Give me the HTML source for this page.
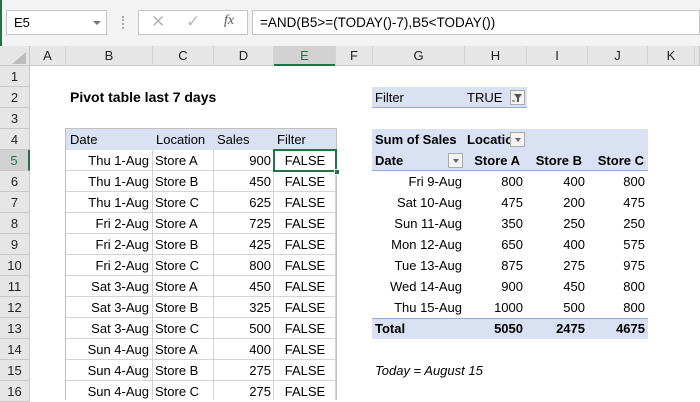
<!DOCTYPE html>
<html><head><style>
*{box-sizing:border-box;margin:0;padding:0}
body{width:700px;height:400px;overflow:hidden;background:#fff;font-family:"Liberation Sans",sans-serif;font-size:13px;color:#000;position:relative}
.a{position:absolute;white-space:nowrap;line-height:21px;height:21px}
.r{text-align:right}
.c{text-align:center}
.b{font-weight:bold}
.vl{position:absolute;top:46px;width:1px;height:354px;background:#d4d4d4}
.hl{position:absolute;left:30px;width:670px;height:1px;background:#d4d4d4}
.rh{position:absolute;left:0;width:30px;height:21px;line-height:21px;text-align:center;background:#e6e6e6;border-bottom:1px solid #c8c8c8;border-right:1px solid #c8c8c8;font-size:13px;color:#222}
.ch{position:absolute;top:46px;height:20px;line-height:20px;text-align:center;background:#e6e6e6;border-right:1px solid #c8c8c8;border-bottom:1px solid #c8c8c8;font-size:13px;color:#222}
.dd{position:absolute;width:15px;height:15px;border:1px solid #aaa;background:#f4f4f4}
.dd:after{content:"";position:absolute;left:4px;top:5px;border-left:3px solid transparent;border-right:3px solid transparent;border-top:4px solid #666}
</style></head><body>
<div style="position:absolute;left:0;top:0;width:700px;height:46px;background:#f3f3f3"></div>
<div style="position:absolute;left:6px;top:10px;width:101px;height:25px;background:#fff;border:1px solid #c6c6c6;line-height:23px;padding-left:7px;font-size:13px">E5</div>
<div style="position:absolute;left:93px;top:21px;border-left:4px solid transparent;border-right:4px solid transparent;border-top:4px solid #777"></div>
<div style="position:absolute;left:122px;top:16px;width:2px;height:13px;border-left:2px dotted #aaa"></div>
<div style="position:absolute;left:138px;top:10px;width:110px;height:25px;background:#fff;border:1px solid #c6c6c6"></div>
<div style="position:absolute;left:151px;top:12px;font-size:17px;color:#b8b8b8">✕</div>
<div style="position:absolute;left:186px;top:12px;font-size:17px;color:#b8b8b8">✓</div>
<div style="position:absolute;left:224px;top:13px;font-size:14px;font-style:italic;font-family:'Liberation Serif',serif;color:#555">fx</div>
<div style="position:absolute;left:252px;top:10px;width:448px;height:25px;background:#fff;border:1px solid #c6c6c6;line-height:23px;padding-left:7px;font-size:13.5px">=AND(B5&gt;=(TODAY()-7),B5&lt;TODAY())</div>
<div style="position:absolute;left:0;top:0;width:2px;height:400px;background:#217346"></div>
<div class="ch" style="left:0;width:30px"></div>
<div style="position:absolute;left:12px;top:52px;border-left:14px solid transparent;border-bottom:12px solid #bdbdbd"></div>
<div class="ch" style="left:30px;width:36px">A</div>
<div class="ch" style="left:66px;width:87px">B</div>
<div class="ch" style="left:153px;width:61px">C</div>
<div class="ch" style="left:214px;width:60px">D</div>
<div class="ch" style="left:274px;width:62px;background:#d2d2d2;border-bottom:2px solid #217346;color:#217346">E</div>
<div class="ch" style="left:336px;width:37px">F</div>
<div class="ch" style="left:373px;width:92px">G</div>
<div class="ch" style="left:465px;width:62px">H</div>
<div class="ch" style="left:527px;width:61px">I</div>
<div class="ch" style="left:588px;width:60px">J</div>
<div class="ch" style="left:648px;width:47px">K</div>
<div class="ch" style="left:695px;width:5px"></div>
<div class="vl" style="left:65px"></div><div class="vl" style="left:152px"></div><div class="vl" style="left:213px"></div><div class="vl" style="left:273px"></div><div class="vl" style="left:335px"></div><div class="vl" style="left:372px"></div><div class="vl" style="left:464px"></div><div class="vl" style="left:526px"></div><div class="vl" style="left:587px"></div><div class="vl" style="left:647px"></div><div class="vl" style="left:694px"></div>
<div class="hl" style="top:86px"></div><div class="hl" style="top:107px"></div><div class="hl" style="top:128px"></div><div class="hl" style="top:149px"></div><div class="hl" style="top:170px"></div><div class="hl" style="top:191px"></div><div class="hl" style="top:212px"></div><div class="hl" style="top:233px"></div><div class="hl" style="top:254px"></div><div class="hl" style="top:275px"></div><div class="hl" style="top:296px"></div><div class="hl" style="top:317px"></div><div class="hl" style="top:338px"></div><div class="hl" style="top:359px"></div><div class="hl" style="top:380px"></div>
<div style="position:absolute;left:30px;top:66px;width:670px;height:63px;background:#fff"></div>
<div style="position:absolute;left:30px;top:129px;width:36px;height:271px;background:#fff"></div>
<div style="position:absolute;left:336px;top:129px;width:364px;height:271px;background:#fff"></div>
<div style="position:absolute;left:648px;top:66px;width:52px;height:334px;background:#fff"></div>
<div class="rh" style="top:66px">1</div><div class="rh" style="top:87px">2</div><div class="rh" style="top:108px">3</div><div class="rh" style="top:129px">4</div>
<div class="rh" style="top:150px;background:#d2d2d2;border-right:2px solid #217346;color:#217346">5</div>
<div class="rh" style="top:171px">6</div><div class="rh" style="top:192px">7</div><div class="rh" style="top:213px">8</div><div class="rh" style="top:234px">9</div><div class="rh" style="top:255px">10</div><div class="rh" style="top:276px">11</div><div class="rh" style="top:297px">12</div><div class="rh" style="top:318px">13</div><div class="rh" style="top:339px">14</div><div class="rh" style="top:360px">15</div><div class="rh" style="top:381px">16</div>
<div class="a b" style="left:70px;top:87px;font-size:14px">Pivot table last 7 days</div>
<div style="position:absolute;left:66px;top:129px;width:270px;height:21px;background:#d9e1f2"></div>
<div style="position:absolute;left:65px;top:128px;width:272px;height:272px;border:1px solid #c0c0c0;border-bottom:none"></div>
<div class="a" style="left:70px;top:129px">Date</div><div class="a" style="left:156px;top:129px">Location</div><div class="a" style="left:217px;top:129px">Sales</div><div class="a" style="left:277px;top:129px">Filter</div>
<div class="a r" style="left:66px;width:83px;top:150px">Thu 1-Aug</div><div class="a" style="left:155px;top:150px">Store A</div><div class="a r" style="left:214px;width:57px;top:150px">900</div><div class="a c" style="left:274px;width:62px;top:150px">FALSE</div>
<div class="a r" style="left:66px;width:83px;top:171px">Thu 1-Aug</div><div class="a" style="left:155px;top:171px">Store B</div><div class="a r" style="left:214px;width:57px;top:171px">450</div><div class="a c" style="left:274px;width:62px;top:171px">FALSE</div>
<div class="a r" style="left:66px;width:83px;top:192px">Thu 1-Aug</div><div class="a" style="left:155px;top:192px">Store C</div><div class="a r" style="left:214px;width:57px;top:192px">625</div><div class="a c" style="left:274px;width:62px;top:192px">FALSE</div>
<div class="a r" style="left:66px;width:83px;top:213px">Fri 2-Aug</div><div class="a" style="left:155px;top:213px">Store A</div><div class="a r" style="left:214px;width:57px;top:213px">725</div><div class="a c" style="left:274px;width:62px;top:213px">FALSE</div>
<div class="a r" style="left:66px;width:83px;top:234px">Fri 2-Aug</div><div class="a" style="left:155px;top:234px">Store B</div><div class="a r" style="left:214px;width:57px;top:234px">425</div><div class="a c" style="left:274px;width:62px;top:234px">FALSE</div>
<div class="a r" style="left:66px;width:83px;top:255px">Fri 2-Aug</div><div class="a" style="left:155px;top:255px">Store C</div><div class="a r" style="left:214px;width:57px;top:255px">800</div><div class="a c" style="left:274px;width:62px;top:255px">FALSE</div>
<div class="a r" style="left:66px;width:83px;top:276px">Sat 3-Aug</div><div class="a" style="left:155px;top:276px">Store A</div><div class="a r" style="left:214px;width:57px;top:276px">450</div><div class="a c" style="left:274px;width:62px;top:276px">FALSE</div>
<div class="a r" style="left:66px;width:83px;top:297px">Sat 3-Aug</div><div class="a" style="left:155px;top:297px">Store B</div><div class="a r" style="left:214px;width:57px;top:297px">325</div><div class="a c" style="left:274px;width:62px;top:297px">FALSE</div>
<div class="a r" style="left:66px;width:83px;top:318px">Sat 3-Aug</div><div class="a" style="left:155px;top:318px">Store C</div><div class="a r" style="left:214px;width:57px;top:318px">500</div><div class="a c" style="left:274px;width:62px;top:318px">FALSE</div>
<div class="a r" style="left:66px;width:83px;top:339px">Sun 4-Aug</div><div class="a" style="left:155px;top:339px">Store A</div><div class="a r" style="left:214px;width:57px;top:339px">400</div><div class="a c" style="left:274px;width:62px;top:339px">FALSE</div>
<div class="a r" style="left:66px;width:83px;top:360px">Sun 4-Aug</div><div class="a" style="left:155px;top:360px">Store B</div><div class="a r" style="left:214px;width:57px;top:360px">275</div><div class="a c" style="left:274px;width:62px;top:360px">FALSE</div>
<div class="a r" style="left:66px;width:83px;top:381px">Sun 4-Aug</div><div class="a" style="left:155px;top:381px">Store C</div><div class="a r" style="left:214px;width:57px;top:381px">275</div><div class="a c" style="left:274px;width:62px;top:381px">FALSE</div>
<div style="position:absolute;left:273px;top:149px;width:64px;height:23px;border:2px solid #217346"></div>
<div style="position:absolute;left:334px;top:169px;width:6px;height:6px;background:#217346;border:1px solid #fff"></div>
<div style="position:absolute;left:372px;top:87px;width:155px;height:21px;background:#d9e1f2;border-bottom:1px solid #8ea9db"></div>
<div class="a" style="left:375px;top:87px">Filter</div>
<div class="a" style="left:467px;top:87px">TRUE</div>
<div style="position:absolute;left:510px;top:90px;width:15px;height:15px;border:1px solid #aaa;background:#f4f4f4">
<svg width="13" height="13" viewBox="0 0 13 13" style="position:absolute;left:0;top:0"><path d="M3 3h8l-3 4v4h-2v-4z" fill="#555"/><path d="M1 10h3" stroke="#555" stroke-width="1"/></svg></div>
<div style="position:absolute;left:372px;top:129px;width:276px;height:42px;background:#d9e1f2;border-bottom:1px solid #8ea9db"></div>
<div class="a b" style="left:375px;top:129px">Sum of Sales</div>
<div class="a b" style="left:467px;top:129px;width:43px;overflow:hidden">Location</div>
<div class="dd" style="left:510px;top:132px"></div>
<div class="a b" style="left:375px;top:150px">Date</div>
<div class="dd" style="left:448px;top:153px"></div>
<div class="a b r" style="left:465px;width:55px;top:150px">Store A</div>
<div class="a b r" style="left:527px;width:55px;top:150px">Store B</div>
<div class="a b r" style="left:588px;width:56px;top:150px">Store C</div>
<div class="a r" style="left:372px;width:90px;top:171px">Fri 9-Aug</div><div class="a r" style="left:465px;width:58px;top:171px">800</div><div class="a r" style="left:527px;width:58px;top:171px">400</div><div class="a r" style="left:588px;width:57px;top:171px">800</div>
<div class="a r" style="left:372px;width:90px;top:192px">Sat 10-Aug</div><div class="a r" style="left:465px;width:58px;top:192px">475</div><div class="a r" style="left:527px;width:58px;top:192px">200</div><div class="a r" style="left:588px;width:57px;top:192px">475</div>
<div class="a r" style="left:372px;width:90px;top:213px">Sun 11-Aug</div><div class="a r" style="left:465px;width:58px;top:213px">350</div><div class="a r" style="left:527px;width:58px;top:213px">250</div><div class="a r" style="left:588px;width:57px;top:213px">250</div>
<div class="a r" style="left:372px;width:90px;top:234px">Mon 12-Aug</div><div class="a r" style="left:465px;width:58px;top:234px">650</div><div class="a r" style="left:527px;width:58px;top:234px">400</div><div class="a r" style="left:588px;width:57px;top:234px">575</div>
<div class="a r" style="left:372px;width:90px;top:255px">Tue 13-Aug</div><div class="a r" style="left:465px;width:58px;top:255px">875</div><div class="a r" style="left:527px;width:58px;top:255px">275</div><div class="a r" style="left:588px;width:57px;top:255px">975</div>
<div class="a r" style="left:372px;width:90px;top:276px">Wed 14-Aug</div><div class="a r" style="left:465px;width:58px;top:276px">900</div><div class="a r" style="left:527px;width:58px;top:276px">450</div><div class="a r" style="left:588px;width:57px;top:276px">800</div>
<div class="a r" style="left:372px;width:90px;top:297px">Thu 15-Aug</div><div class="a r" style="left:465px;width:58px;top:297px">1000</div><div class="a r" style="left:527px;width:58px;top:297px">500</div><div class="a r" style="left:588px;width:57px;top:297px">800</div>
<div style="position:absolute;left:372px;top:318px;width:276px;height:21px;background:#d9e1f2;border-top:1px solid #8ea9db"></div>
<div class="a b" style="left:375px;top:318px">Total</div>
<div class="a b r" style="left:465px;width:58px;top:318px">5050</div><div class="a b r" style="left:527px;width:58px;top:318px">2475</div><div class="a b r" style="left:588px;width:57px;top:318px">4675</div>
<div class="a" style="left:375px;top:360px;font-style:italic">Today = August 15</div>
</body></html>
